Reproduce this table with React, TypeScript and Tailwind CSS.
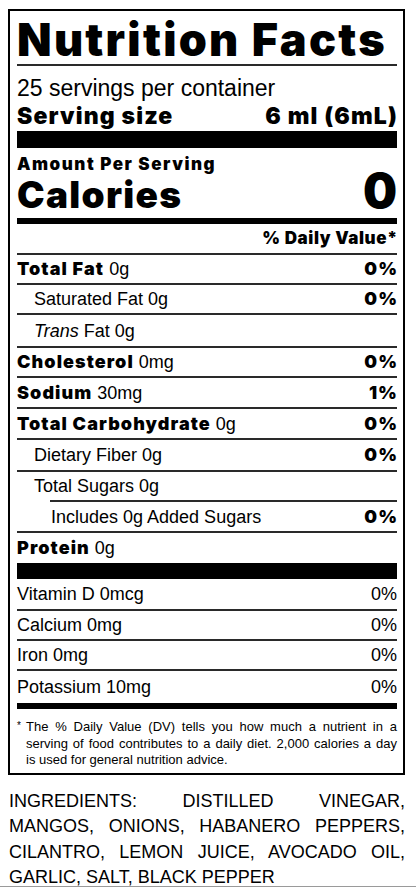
import type { ReactNode } from "react";

const heavy = "font-['Inter',sans-serif] font-black tracking-[0.06em]";

function Row({
  height,
  indent = "",
  lineIndent = "",
  line = true,
  pct,
  pctBold = true,
  children
}: {
  height: string;
  indent?: string;
  lineIndent?: string;
  line?: boolean;
  pct?: string;
  pctBold?: boolean;
  children: ReactNode;
}) {
  return (
    <div className={`${height} flex flex-col`}>
      <div className={`flex flex-1 items-center justify-between text-[18px] leading-none ${indent}`}>
        <span>{children}</span>
        {pct && <span className={pctBold ? `${heavy} -mr-[1px]` : ""}>{pct}</span>}
      </div>
      {line && <div className={`h-[2px] bg-[#2a2a2a] ${lineIndent}`} />}
    </div>
  );
}

export default function App() {
  return (
    <div className="w-[416px] h-[887px] overflow-hidden border-b border-[#9a9a9a] bg-white text-black font-['Liberation_Sans',Arial,sans-serif]">
      <div className="ml-[8px] mt-[9px] w-[397px] border-2 border-black pl-[7px] pr-[6px]">
        <div className="h-[55px] border-b-2 border-[#2a2a2a]">
          <h1 className="font-['Inter',sans-serif] font-black text-[45px] leading-[57px] tracking-[0.05em]">
            Nutrition Facts
          </h1>
        </div>

        <div className="h-[65px] pt-[8px]">
          <p className="text-[23px] leading-[28px]">25 servings per container</p>
          <div className="font-['Inter',sans-serif] font-black tracking-[0.05em] flex justify-between text-[23px] leading-[28px]">
            <span>Serving size</span>
            <span className="-mr-[1px]">6 ml (6mL)</span>
          </div>
        </div>

        <div className="h-[17px] bg-black" />

        <div className="h-[70px] pt-[6px]">
          <p className="font-['Inter',sans-serif] font-black tracking-[0.09em] text-[17px] leading-[20px]">
            Amount Per Serving
          </p>
          <div className="font-['Inter',sans-serif] font-black flex items-baseline justify-between leading-[34px]">
            <span className="text-[37px] tracking-[0.035em]">Calories</span>
            <span className="text-[48px]">0</span>
          </div>
        </div>

        <div className="h-[6px] bg-black" />

        <div className="h-[31px] flex flex-col">
          <div className="flex flex-1 items-center justify-end">
            <span className="font-['Inter',sans-serif] font-black tracking-[0.035em] -mr-[1px] text-[17px] leading-none">
              % Daily Value*
            </span>
          </div>
          <div className="h-[2px] bg-[#2a2a2a]" />
        </div>

        <Row height="h-[30px]" pct="0%">
          <b className={heavy}>Total Fat</b> 0g
        </Row>
        <Row height="h-[30px]" indent="pl-[17px]" pct="0%">
          Saturated Fat 0g
        </Row>
        <Row height="h-[33px]" indent="pl-[17px]">
          <i>Trans</i> Fat 0g
        </Row>
        <Row height="h-[30px]" pct="0%">
          <b className={heavy}>Cholesterol</b> 0mg
        </Row>
        <Row height="h-[31px]" pct="1%">
          <b className={heavy}>Sodium</b> 30mg
        </Row>
        <Row height="h-[31px]" pct="0%">
          <b className={heavy}>Total Carbohydrate</b> 0g
        </Row>
        <Row height="h-[32px]" indent="pl-[17px]" pct="0%">
          Dietary Fiber 0g
        </Row>
        <Row height="h-[30px]" indent="pl-[17px]" lineIndent="ml-[33px]">
          Total Sugars 0g
        </Row>
        <Row height="h-[31px]" indent="pl-[34px]" pct="0%">
          Includes 0g Added Sugars
        </Row>
        <Row height="h-[30px]" line={false}>
          <b className={heavy}>Protein</b> 0g
        </Row>

        <div className="h-[16px] bg-black" />

        <Row height="h-[32px]" pct="0%" pctBold={false}>
          Vitamin D 0mcg
        </Row>
        <Row height="h-[30px]" pct="0%" pctBold={false}>
          Calcium 0mg
        </Row>
        <Row height="h-[30px]" pct="0%" pctBold={false}>
          Iron 0mg
        </Row>
        <Row height="h-[32px]" pct="0%" pctBold={false} line={false}>
          Potassium 10mg
        </Row>

        <div className="h-[6px] bg-black" />

        <div className="pl-[9px] pt-[10px] pb-[4px] text-[13px] leading-[16.5px]">
          <p className="[text-align-last:justify]">
            <span className="-ml-[9px] inline-block w-[9px] align-top text-[10px] leading-[14px]">*</span>
            The % Daily Value (DV) tells you how much a nutrient in a
          </p>
          <p className="[text-align-last:justify]">serving of food contributes to a daily diet. 2,000 calories a day</p>
          <p>is used for general nutrition advice.</p>
        </div>
      </div>

      <div className="ml-[9px] w-[396px] pt-[14px] text-[18px] leading-[25.5px] uppercase">
        <p className="[text-align-last:justify]">INGREDIENTS: DISTILLED VINEGAR,</p>
        <p className="[text-align-last:justify]">MANGOS, ONIONS, HABANERO PEPPERS,</p>
        <p className="[text-align-last:justify]">CILANTRO, LEMON JUICE, AVOCADO OIL,</p>
        <p>GARLIC, SALT, BLACK PEPPER</p>
      </div>
    </div>
  );
}
